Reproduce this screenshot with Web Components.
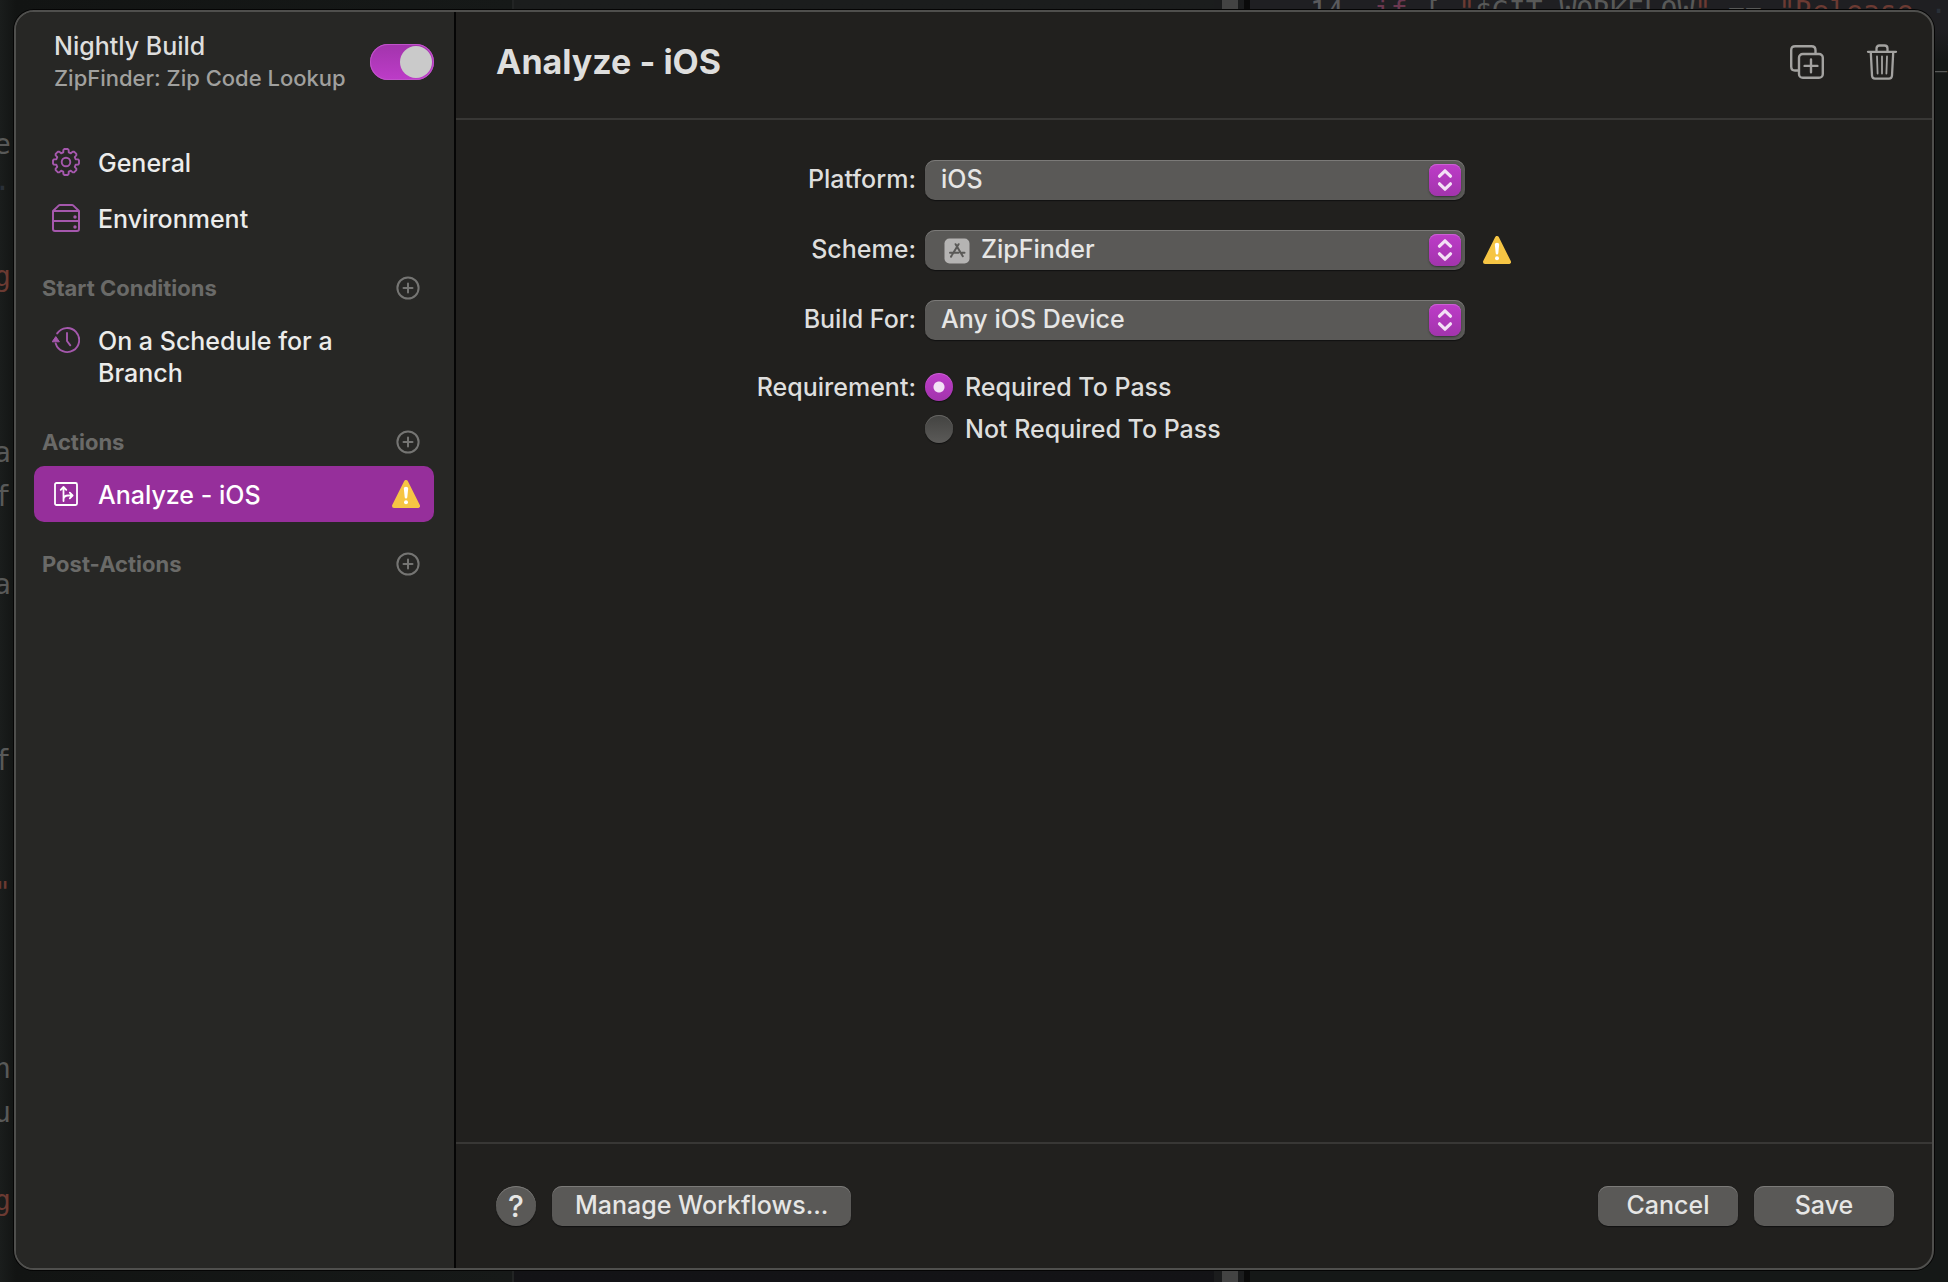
<!DOCTYPE html>
<html lang="en">
<head>
<meta charset="utf-8">
<title>Nightly Build – Workflow</title>
<style>
  html, body { margin: 0; height: 100%; background: #141616; overflow: hidden; }
  body {
    font-family: Inter, "Liberation Sans", sans-serif;
    font-size: 25px;
    font-weight: 500;
    line-height: 32px;
    color: #dededd;
    --accent-light: #bd3cc8;
    --accent-dark: #a234ac;
    --accent-icon: #a558ad;
    --selection: #962f9b;
    --control: #5a5957;
    --control-edge: #7b7a78;
    --rule: #383735;
  }
</style>
</head>
<body>
<workflow-app>
  <code-backdrop slot="backdrop"></code-backdrop>
  <workflow-sheet>
    <side-bar slot="sidebar">
      <workflow-title slot="head" name="Nightly Build" project="ZipFinder: Zip Code Lookup"></workflow-title>
      <nav-row icon="gear">General</nav-row>
      <nav-row icon="server">Environment</nav-row>
      <nav-section>Start Conditions</nav-section>
      <nav-row icon="history">On a Schedule for a Branch</nav-row>
      <nav-section>Actions</nav-section>
      <nav-row icon="branch" selected warning>Analyze - iOS</nav-row>
      <nav-section>Post-Actions</nav-section>
    </side-bar>
    <detail-header slot="header">Analyze - iOS</detail-header>
    <select-row label="Platform:"><option>iOS</option></select-row>
    <select-row label="Scheme:" icon="app" warning><option>ZipFinder</option></select-row>
    <select-row label="Build For:"><option>Any iOS Device</option></select-row>
    <radio-row label="Requirement:" options="Required To Pass|Not Required To Pass"></radio-row>
    <detail-footer slot="footer"></detail-footer>
  </workflow-sheet>
</workflow-app>

<script>
const ICONS = {
  gear: (() => {
    // Eight-toothed outline gear, generated around the centre of a 28px box
    const pts = [];
    const at = (r, deg) => {
      const a = (deg - 90) * Math.PI / 180;
      return (14 + r * Math.cos(a)).toFixed(2) + ' ' + (14 + r * Math.sin(a)).toFixed(2);
    };
    for (let i = 0; i < 8; i++) {
      const c = i * 45;
      pts.push(at(10, c - 16), at(12.4, c - 12), at(13.1, c - 7), at(13.1, c + 7), at(12.4, c + 12), at(10, c + 16));
    }
    return `<svg viewBox="0 0 28 28" width="28" height="28"><g fill="none" stroke="currentColor" stroke-width="1.9" stroke-linejoin="round"><path d="M${pts.join('L')}Z"/><circle cx="14" cy="14" r="4.3"/></g></svg>`;
  })(),
  server: `<svg viewBox="0 0 28 28" width="28" height="28"><g fill="none" stroke="currentColor" stroke-width="2" stroke-linejoin="round"><path d="M1 7 6.6 1.6Q7.200 1 8 1H20Q20.800 1 21.400 1.600L27 7V25Q27 27 25 27H3Q1 27 1 25ZM1 7H27M1 17H27"/></g><circle cx="23" cy="13" r="1.700" fill="currentColor"/><circle cx="23" cy="23" r="1.700" fill="currentColor"/></svg>`,
  history: `<svg viewBox="0 0 28 28" width="28" height="28"><g fill="none" stroke="currentColor" stroke-width="1.9" stroke-linecap="round" stroke-linejoin="round"><path d="M5.200 7.400A12 12 0 1 1 3.700 17.500M15 7V15L18.300 19.300"/></g><path d="M3.800 10.600 7.400 15.800H.2Z" fill="currentColor" stroke="currentColor" stroke-linejoin="round"/></svg>`,
  branch: `<svg viewBox="0 0 28 28" width="28" height="28"><g fill="none" stroke="currentColor" stroke-width="1.800" stroke-linecap="round" stroke-linejoin="round"><rect x="3" y="3" width="22" height="22" rx="1.500"/><path d="M11.500 21V7.200M8.700 9.800 11.500 7 14.300 9.800M11.500 19Q12 15.500 16 15.500H20.500M17.800 12.700 20.600 15.500 17.800 18.300"/></g></svg>`,
  plus: `<svg viewBox="0 0 24 24" width="24" height="24"><g fill="none" stroke="currentColor" stroke-width="2" stroke-linecap="round"><circle cx="12" cy="12" r="10.600"/><path d="M12 7.500V16.500M7.500 12H16.500"/></g></svg>`,
  warning: `<svg viewBox="0 0 28 28" width="28" height="28"><path d="M14 2 26 26H2Z" fill="#f6c544" stroke="#f6c544" stroke-width="4" stroke-linejoin="round"/><path d="M11.800 8.600Q11.800 6.800 14 6.800T16.200 8.600L15.300 17.300Q15.200 18.600 14 18.600T12.700 17.300Z" fill="#fff"/><circle cx="14" cy="22.300" r="2" fill="#fff"/></svg>`,
  app: `<svg viewBox="0 0 26 26" width="26" height="26"><rect x=".5" y=".5" width="25" height="25" rx="5" fill="#b5b4b3"/><g fill="none" stroke="#5a5957" stroke-width="2" stroke-linecap="round"><path d="M14.600 6.200 8.300 16.600M11.600 6.200 18.800 18.200M6 14.800H14.500M18 14.800H20.500M7 18.700 7.500 17.900"/></g></svg>`,
  stepper: `<svg viewBox="0 0 32 32" width="32" height="32"><g fill="none" stroke="#f3e0f5" stroke-width="3.200" stroke-linecap="round" stroke-linejoin="round"><path d="M10.500 12.200 16 6.800 21.500 12.200M10.500 19.800 16 25.200 21.500 19.800"/></g></svg>`,
  duplicate: `<svg viewBox="0 0 34 34" width="34" height="34"><g fill="none" stroke="#a3a2a0" stroke-width="2.400" stroke-linejoin="round" stroke-linecap="round"><path d="M8 25.500H5Q1.200 25.500 1.200 21.500V5.200Q1.200 1.200 5.200 1.200H21.500Q25.500 1.200 25.500 5.200V8"/><rect x="9" y="9" width="23.800" height="23.800" rx="3.800"/><path d="M21 14.500V27.300M14.600 20.900H27.400"/></g></svg>`,
  trash: `<svg viewBox="0 0 32 36" width="32" height="36"><g fill="none" stroke="#a3a2a0" stroke-width="2.300" stroke-linejoin="round" stroke-linecap="round"><path d="M2 7.800H30M10.500 7.300V4.500Q10.500 1.500 13.500 1.500H18.500Q21.500 1.500 21.500 4.500V7.300M4.800 8.500 6 31.500Q6.200 34.600 9 34.600H23Q25.800 34.600 26 31.500L27.200 8.500"/><path stroke-width="1.800" d="M11 12.500 11.600 29.500M16 12.500V29.500M21 12.500 20.400 29.500"/></g></svg>`
};

function define(name, render) {
  customElements.define(name, class extends HTMLElement {
    constructor() { super(); this.attachShadow({ mode: 'open' }); }
    connectedCallback() {
      if (this.shadowRoot.childNodes.length) return;
      this.shadowRoot.innerHTML = '<style>*{box-sizing:border-box}svg{display:block}button,select,input{font:inherit;color:inherit;margin:0}</style>' + render(this);
      if (this.tagName === 'SELECT-ROW') this.shadowRoot.querySelector('select').append(...this.querySelectorAll('option'));
    }
  });
}

define('workflow-app', () => `
<style>
  :host { display: grid; height: 100vh; }
  ::slotted(*) { grid-area: 1 / 1; min-width: 0; min-height: 0; }
</style>
<slot name="backdrop"></slot><slot></slot>`);

define('code-backdrop', () => `
<style>
  :host {
    display: flex; overflow: hidden;
    font-family: "DejaVu Sans Mono", "Liberation Mono", monospace;
    font-size: 28px; font-weight: 400; line-height: 44px; color: #585958; background: #1a1c1c;
  }
  pre { margin: 0; font: inherit; }
  .red { color: #6b3a32; } .pink { color: #6b3850; } .dot { color: #2a3038; }
  .left { flex: 0 0 514px; border-right: 2px solid #222424; background: linear-gradient(90deg, #1a1d1c, #121413 16px, #161918); padding-top: 123px; overflow: hidden; }
  .left pre { margin-left: -6px; }
  .mid { flex: 0 0 700px; background: linear-gradient(#1b1d1d, #131316); }
  .track { flex: 0 0 36px; background: #1b1c1d; border-right: 6px solid #0a0a0a; padding: 0 6px 0 8px; }
  .thumb { height: 100%; background: #434343; }
  .right { flex: 1; min-width: 0; background: linear-gradient(#1f1f22 30px, #151817 60px); padding-left: 14px; overflow: hidden; }
  .lines { border-left: 11px solid #1d3253; height: 10px; }
  .lines pre { padding-left: 35px; }
  .shift { display: block; margin-top: -10px; }
  .num { display: inline-block; width: 64px; color: #5a5a5d; }
</style>
<div class="left">
<pre>e
<span class="dot">·</span>

<span class="red">g</span>



a
f

a



f


<span class="red">"</span>



n
u

<span class="red">g</span></pre>
</div>
<div class="mid"></div>
<div class="track"><div class="thumb"></div></div>
<div class="right"><div class="lines"><pre><span class="shift"><span class="num">14</span><span class="pink">if</span> [ <span class="red">"</span>$GIT_WORKFLOW<span class="red">"</span> == <span class="red">"Release</span> <span class="dot">·</span><span class="red">i</span></span><span class="num"></span>                                 _V</pre></div></div>`);

define('workflow-sheet', () => `
<style>
  :host {
    display: grid; position: relative; margin: 10px 14px 12px;
    grid-template-columns: 440px minmax(0, 1fr);
    grid-template-rows: 108px minmax(0, 1fr) 126px;
    border: 2px solid #4f4f4d; border-radius: 20px; overflow: hidden;
    background: #21201e; box-shadow: 0 0 0 1px #050505;
  }
  slot[name=sidebar]::slotted(*) { grid-row: 1 / 4; grid-column: 1; }
  main { padding: 40px 40px 40px 42px; display: flex; flex-direction: column; gap: 30px; }
</style>
<slot name="sidebar"></slot>
<slot name="header"></slot>
<main><slot></slot></main>
<slot name="footer"></slot>`);

define('side-bar', () => `
<style>
  :host { display: block; background: #272725; border-right: 2px solid #050505; padding: 0 20px 0 18px; }
  nav { display: flex; flex-direction: column; }
</style>
<slot name="head"></slot>
<nav><slot></slot></nav>`);

define('workflow-title', el => `
<style>
  :host { display: flex; justify-content: space-between; align-items: center; height: 100px; margin-bottom: 22px; padding-left: 20px; }
  label { display: flex; flex-direction: column; white-space: nowrap; }
  small { font-size: 22px; color: #a0a09e; }
  input {
    appearance: none; flex: none; width: 64px; height: 36px; border-radius: 18px; padding: 2px; display: flex;
    background: linear-gradient(var(--accent-dark), var(--accent-light));
    box-shadow: inset 0 0 0 1px #c053ca;
  }
  input::before { content: ""; width: 32px; height: 32px; border-radius: 50%; background: #cacaca; }
  input:checked { justify-content: flex-end; }
</style>
<label for="on"><span>${el.getAttribute('name')}</span><small>${el.getAttribute('project')}</small></label>
<input id="on" type="checkbox" role="switch" checked>`);

define('nav-row', el => `
<style>
  :host { display: block; color: #ececeb; }
  a { display: flex; align-items: flex-start; gap: 18px; padding: 13px 14px 11px 18px; border-radius: 10px; color: inherit; text-decoration: none; }
  :host([selected]) a { background: var(--selection); color: #fff; }
  i { flex: none; padding: 1px 0 3px; color: var(--accent-icon); }
  :host([selected]) i { color: inherit; }
  span { flex: 1; }
</style>
<a href="#"><i>${ICONS[el.getAttribute('icon')]}</i><span><slot></slot></span>${el.hasAttribute('warning') ? `<i>${ICONS.warning}</i>` : ''}</a>`);

define('nav-section', () => `
<style>
  :host { display: flex; justify-content: space-between; align-items: center; height: 48px; margin-top: 18px; padding: 0 14px 0 8px; color: #6a6a68; }
  h3 { margin: 0; font-size: 22px; font-weight: 700; }
  button { border: 0; padding: 0; background: none; color: #757573; }
</style>
<h3><slot></slot></h3><button aria-label="Add">${ICONS.plus}</button>`);

define('detail-header', () => `
<style>
  :host { display: flex; align-items: center; justify-content: space-between; padding: 0 34px 6px 40px; border-bottom: 2px solid var(--rule); }
  h1 { margin: 0; font-size: 34px; line-height: 44px; font-weight: 700; }
  div { display: flex; align-items: center; gap: 42px; }
  button { border: 0; padding: 0; background: none; }
</style>
<h1><slot></slot></h1>
<div><button aria-label="Duplicate">${ICONS.duplicate}</button><button aria-label="Delete">${ICONS.trash}</button></div>`);

const ROW_STYLE = `
  :host { display: grid; grid-template-columns: minmax(0, 1fr) minmax(0, 540px) minmax(0, 1fr); column-gap: 9px; }
  .label { text-align: right; line-height: 38px; white-space: nowrap; }`;

define('select-row', el => `
<style>${ROW_STYLE}
  .box { position: relative; }
  select {
    appearance: none; display: block; width: 100%; height: 40px; padding: 0 44px 2px 16px; line-height: 38px;
    border: 0; border-radius: 10px; background: var(--control); color: #e6e6e5;
    box-shadow: inset 0 1px 0 var(--control-edge), 0 1px 1px #111;
  }
  .step {
    position: absolute; right: 4px; top: 4px; border-radius: 8px; pointer-events: none;
    background: linear-gradient(var(--accent-light), var(--accent-dark)); box-shadow: 0 1px 2px #333, inset 0 1px 0 #cb63d4;
  }
  .lead { position: absolute; left: 19px; top: 8px; pointer-events: none; }
  :host([icon]) select { padding-left: 56px; }
  .warn { padding: 6px 9px; }
</style>
<label class="label" for="s">${el.getAttribute('label')}</label>
<div class="box"><select id="s"></select>${el.hasAttribute('icon') ? `<span class="lead">${ICONS[el.getAttribute('icon')]}</span>` : ''}<span class="step">${ICONS.stepper}</span></div>
<div class="warn">${el.hasAttribute('warning') ? ICONS.warning : ''}</div>`);

define('radio-row', el => `
<style>${ROW_STYLE}
  :host { margin-top: -2px; }
  .group { display: flex; flex-direction: column; gap: 4px; }
  .group label { display: flex; align-items: center; gap: 12px; height: 38px; }
  input {
    appearance: none; flex: none; width: 28px; height: 28px; border-radius: 50%;
    background: linear-gradient(#434341, #5b5a58); box-shadow: inset 0 1px 0 #666563, 0 1px 1px #111;
  }
  input:checked {
    background: radial-gradient(circle, #f3e0f5 0 5px, transparent 6px), linear-gradient(var(--accent-light), var(--accent-dark));
    box-shadow: inset 0 1px 0 #cb63d4, 0 1px 1px #111;
  }
</style>
<span class="label" id="g">${el.getAttribute('label')}</span>
<div class="group" role="radiogroup" aria-labelledby="g">${el.getAttribute('options').split('|').map((o, i) =>
  `<label><input type="radio" name="r"${i ? '' : ' checked'}><span>${o}</span></label>`).join('')}</div>`);

define('detail-footer', () => `
<style>
  :host { display: flex; align-items: center; gap: 16px; padding: 0 38px 0 40px; border-top: 2px solid var(--rule); }
  button {
    height: 40px; min-width: 140px; padding: 0 23px 2px; border: 0; border-radius: 10px; background: var(--control); color: #e6e6e5;
    box-shadow: inset 0 1px 0 var(--control-edge), 0 1px 1px #111; white-space: nowrap;
  }
  .help { min-width: 0; width: 40px; padding: 0; border-radius: 50%; font-size: 30px; }
  .gap { flex: 1; }
</style>
<button class="help" aria-label="Help">?</button>
<button>Manage Workflows...</button>
<span class="gap"></span>
<button>Cancel</button>
<button>Save</button>`);
</script>
</body>
</html>
